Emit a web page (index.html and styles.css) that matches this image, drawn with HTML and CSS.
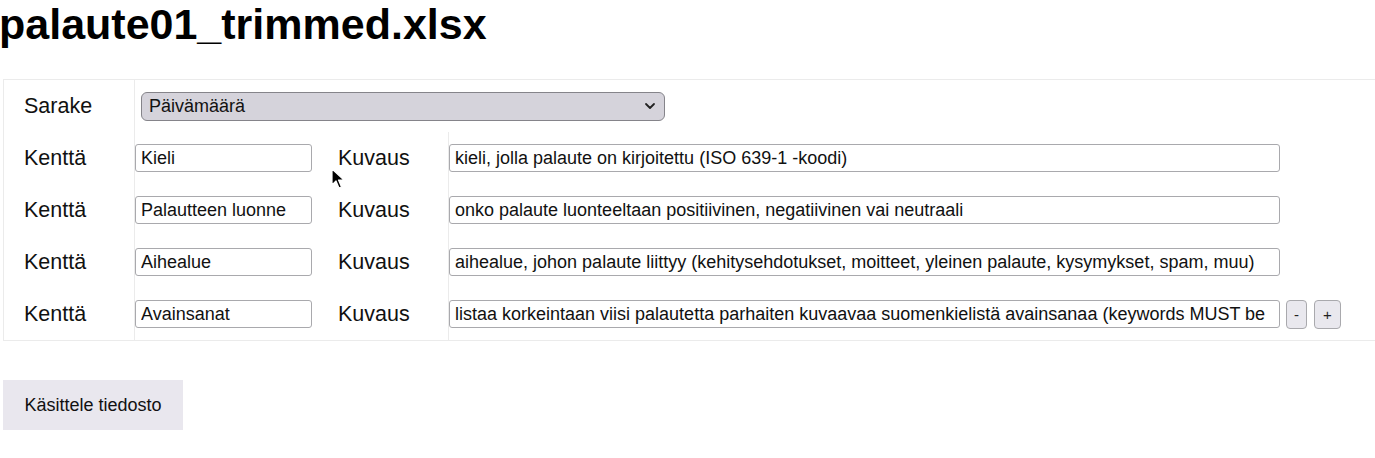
FILE: index.html
```html
<!DOCTYPE html>
<html lang="fi">
<head>
<meta charset="utf-8">
<title>palaute01_trimmed.xlsx</title>
<link rel="stylesheet" href="styles.css">
</head>
<body>
<div class="page">
  <h1 class="title">palaute01_trimmed.xlsx</h1>
  <div class="panel">
    <div class="row row-head">
      <div class="cell label">Sarake</div>
      <div class="cell select-cell">
        <div class="select">
          <span>Päivämäärä</span>
          <svg class="chev" width="12" height="8" viewBox="0 0 12 8"><path d="M2 2 L6 6 L10 2" fill="none" stroke="#222" stroke-width="1.8" stroke-linecap="round" stroke-linejoin="round"/></svg>
        </div>
      </div>
    </div>
    <div class="row">
      <div class="cell label">Kenttä</div>
      <div class="cell field"><input class="inp name" value="Kieli"></div>
      <div class="cell label2">Kuvaus</div>
      <div class="cell desc"><input class="inp long" value="kieli, jolla palaute on kirjoitettu (ISO 639-1 -koodi)"></div>
    </div>
    <div class="row">
      <div class="cell label">Kenttä</div>
      <div class="cell field"><input class="inp name" value="Palautteen luonne"></div>
      <div class="cell label2">Kuvaus</div>
      <div class="cell desc"><input class="inp long" value="onko palaute luonteeltaan positiivinen, negatiivinen vai neutraali"></div>
    </div>
    <div class="row">
      <div class="cell label">Kenttä</div>
      <div class="cell field"><input class="inp name" value="Aihealue"></div>
      <div class="cell label2">Kuvaus</div>
      <div class="cell desc"><input class="inp long" value="aihealue, johon palaute liittyy (kehitysehdotukset, moitteet, yleinen palaute, kysymykset, spam, muu)"></div>
    </div>
    <div class="row">
      <div class="cell label">Kenttä</div>
      <div class="cell field"><input class="inp name" value="Avainsanat"></div>
      <div class="cell label2">Kuvaus</div>
      <div class="cell desc">
        <input class="inp long clip" value="listaa korkeintaan viisi palautetta parhaiten kuvaavaa suomenkielistä avainsanaa (keywords MUST be in Finnish)">
        <button class="small minus">-</button>
        <button class="small plus">+</button>
      </div>
    </div>
  </div>
  <button class="process">Käsittele tiedosto</button>
  <svg class="cursor" width="14" height="22" viewBox="0 0 14 22"><path d="M1 1 L1 17 L5 13 L8 20 L10.5 19 L7.5 12 L13 12 Z" fill="#000" stroke="#fff" stroke-width="1.2" stroke-linejoin="round"/></svg>
</div>
</body>
</html>
```

FILE: styles.css
```css
* { box-sizing: border-box; }
html, body {
  margin: 0;
  padding: 0;
  background: #fff;
  overflow: hidden;
}
body {
  font-family: Arial, "Liberation Sans", sans-serif;
  color: #111;
}
.page {
  position: relative;
  width: 1375px;
  height: 458px;
}
.title {
  margin: 0;
  font-size: 43px;
  line-height: 49px;
  font-weight: bold;
  color: #000;
  margin-left: -1px;
}
.panel {
  margin-top: 30px;
  margin-left: 3px;
  width: 1390px;
  border: 1px solid #ebebeb;
}
.row {
  display: grid;
  grid-template-columns: 130px 196px 118px 1fr;
  height: 52px;
  align-items: stretch;
}
.row-head {
  grid-template-columns: 130px 1fr;
}
.cell {
  display: flex;
  align-items: center;
}
.label {
  padding-left: 20px;
  padding-top: 1px;
  font-size: 21.5px;
}
.label2 {
  padding-left: 8px;
  padding-top: 1px;
  font-size: 21.5px;
}
.field, .select-cell {
  border-left: 1px solid #ebebeb;
}
.desc {
  border-left: 1px solid #ebebeb;
  gap: 6px;
}
.select-cell {
  padding-left: 6px;
}
.select {
  width: 524px;
  height: 29px;
  background: #d5d3db;
  border: 1px solid #85848a;
  border-radius: 6px;
  display: flex;
  align-items: center;
  justify-content: space-between;
  padding: 0 8px 0 7px;
  font-size: 18px;
  color: #111;
}
.chev { display: block; }
.inp {
  font-family: Arial, "Liberation Sans", sans-serif;
  font-size: 18px;
  height: 28px;
  border: 1px solid #a9a9ad;
  border-radius: 3px;
  padding: 0 5px;
  color: #111;
  background: #fff;
  outline: none;
}
.name { width: 177px; }
.long { width: 831px; }
.clip { padding-right: 11px; }
.small {
  height: 29px;
  border: 1px solid #a9a9ad;
  border-radius: 4px;
  background: #e9e8ee;
  font-family: Arial, "Liberation Sans", sans-serif;
  font-size: 15px;
  color: #222;
  padding: 0;
}
.minus { width: 21px; }
.plus { width: 27px; margin-left: 1px; }
.process {
  display: block;
  margin-top: 39px;
  margin-left: 3px;
  width: 180px;
  height: 50px;
  border: none;
  background: #e9e7ee;
  font-family: Arial, "Liberation Sans", sans-serif;
  font-size: 18px;
  color: #111;
  padding: 0;
  text-align: center;
}
.cursor {
  position: absolute;
  left: 331px;
  top: 168px;
}
```
